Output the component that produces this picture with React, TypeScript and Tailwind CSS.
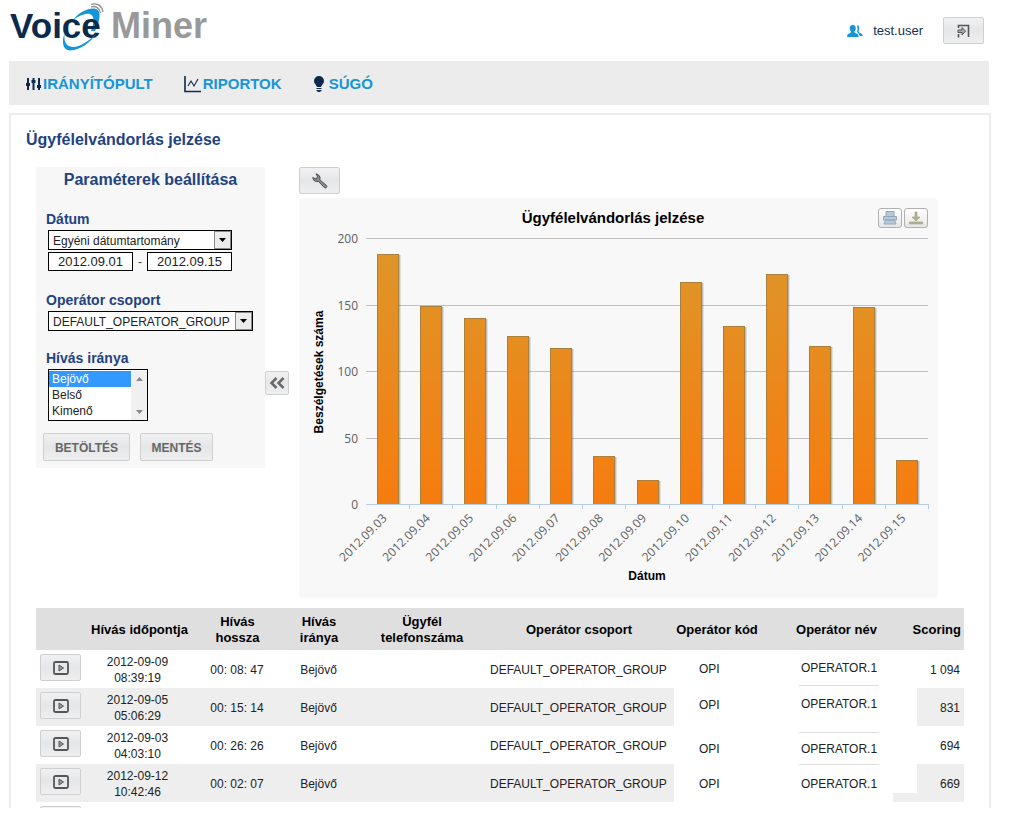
import React from "react";

type CallRow = {
  date: string;
  time: string;
  length: string;
  score: string;
  shaded: boolean;
  align: string;
  box: string;
  line: string;
};

const calls: CallRow[] = [
  { date: "2012-09-09", time: "08:39:19", length: "00: 08: 47", score: "1 094", shaded: false, align: "items-start", box: "h-9", line: "border-b" },
  { date: "2012-09-05", time: "05:06:29", length: "00: 15: 14", score: "831", shaded: true, align: "items-start", box: "h-8", line: "" },
  { date: "2012-09-03", time: "04:03:10", length: "00: 26: 26", score: "694", shaded: false, align: "items-end", box: "h-8", line: "border-t" },
  { date: "2012-09-12", time: "10:42:46", length: "00: 02: 07", score: "669", shaded: true, align: "items-center", box: "h-full", line: "border-t" },
];

const bars = [
  { day: "2012.09.03", value: 188 },
  { day: "2012.09.04", value: 149 },
  { day: "2012.09.05", value: 140 },
  { day: "2012.09.06", value: 126 },
  { day: "2012.09.07", value: 117 },
  { day: "2012.09.08", value: 36 },
  { day: "2012.09.09", value: 18 },
  { day: "2012.09.10", value: 167 },
  { day: "2012.09.11", value: 134 },
  { day: "2012.09.12", value: 173 },
  { day: "2012.09.13", value: 119 },
  { day: "2012.09.14", value: 148 },
  { day: "2012.09.15", value: 33 },
];

const buttonSkin =
  "flex items-center justify-center rounded-[2px] border border-[#cfcfcf] bg-linear-to-b from-[#f1f1f2] via-[#e4e6e8] to-[#efeff0]";

function Logo() {
  return (
    <svg viewBox="0 0 210 54" className="block h-[54px] w-[210px]" role="img" aria-label="Voice Miner">
      <g fill="none" stroke="#8d8d8d">
        <path d="M82 4.500C87 2.500 93 5 94 12" strokeWidth="1.300" />
        <path d="M82 7C86 5.500 90.500 7.500 91.500 13" strokeWidth="1.300" />
      </g>
      <path
        d="M64 20C70 12 79 8 85 8.500C91 9 92 15 89 24L86 31H82C84 25 86 19 83 15.500C80 12 73 14 64 20Z"
        fill="#1495d8"
      />
      <g fontWeight="700" fontFamily="'Liberation Sans', Arial, sans-serif">
        <text x="1" y="38" fontSize="35" fill="#0b2a4d">Voice</text>
        <text x="102" y="38" fontSize="36" fill="#999999">Miner</text>
      </g>
      <path
        d="M56 32C52 42 54 50.500 61 50.500C71 50.500 82 42 88 33C80 41 71 47 64 47C57 46.500 54 41 56 32Z"
        fill="#1495d8"
      />
    </svg>
  );
}

function SlidersIcon() {
  return (
    <svg viewBox="0 0 15 12" className="h-3 w-[15px]" aria-hidden="true" fill="#0b2a4d">
      <path d="M1 0h2v12H1zM6.500 0h2v12h-2zM12 0h2v12h-2zM0 5h4v3H0zM5.500 2h4v3h-4zM11 7h4v3h-4z" />
    </svg>
  );
}

function ReportIcon() {
  return (
    <svg viewBox="0 0 17 17" className="h-[17px] w-[17px]" aria-hidden="true" fill="none" stroke="#0b2a4d">
      <path d="M1 0v15.500h16" strokeWidth="1.600" />
      <path d="M4 10l3-5 3 5 4-7" strokeWidth="1.100" />
    </svg>
  );
}

function BulbIcon() {
  return (
    <svg viewBox="0 0 12 16" className="h-4 w-3" aria-hidden="true" fill="#0b2a4d">
      <path d="M6 0a5 5 0 0 1 5 5c0 2.500-2 3.500-3 6H4C3 8.500 1 7.500 1 5a5 5 0 0 1 5-5zM3.500 12h5v1h-5zM3.500 14h5v1l-2 1h-1l-2-1z" />
    </svg>
  );
}

function UsersIcon() {
  return (
    <svg viewBox="0 0 16 12" className="h-3 w-4" aria-hidden="true" fill="#1495d8">
      <path d="M9.800 0.500h1.500c1.400 1 1.400 3.500.3 5.200l.2 1.500 3.200 1.800.8 2h-3L11.500 8.500 10 7c.8-2 .8-4.500-.2-6.500z" />
      <path d="M5.500 0C8 0 9 1.500 8.700 3.700 8.500 5 8 5.800 7.500 6.300v1.200l3.500 1.700.8 2.800H0l.7-2.800L4 7.500V6.300C3.200 5.500 2.700 4.500 2.700 3 2.700 1 4 0 5.500 0z" />
    </svg>
  );
}

function ExitIcon() {
  return (
    <svg viewBox="0 0 13 14" className="h-3.5 w-[13px]" aria-hidden="true" fill="none" stroke="#555">
      <path d="M1.500 4V1.500h10V13M1.500 10v3.500" strokeWidth="1.600" />
      <path d="M1 6h4V3.500L8.500 7.200 5 11V8.500H1z" strokeWidth="1" fill="#aaa" />
    </svg>
  );
}

function WrenchIcon() {
  return (
    <svg viewBox="0 0 16 16" className="h-4 w-4" aria-hidden="true" fill="#8c8c8c" stroke="#4d4d4d" strokeWidth="1">
      <path d="M4 .8l2.800 1.400 1.400 2.500-.5 2 7 6c.7 1-.6 2.700-2 2.200L6.300 8.300l-2 .3-2.500-1.300L.7 4.500l2.500 1.300 1.800-.6.400-1.900z" />
    </svg>
  );
}

function PlayIcon() {
  return (
    <svg viewBox="0 0 16 14" className="h-3.5 w-4" aria-hidden="true">
      <rect x="1" y="1" width="14" height="12" rx="1.500" fill="none" stroke="#555" strokeWidth="1.800" />
      <path d="M6 4v6l4.500-3z" fill="#999" stroke="#555" strokeWidth="1" />
    </svg>
  );
}

function DropArrow() {
  return (
    <span className="pointer-events-none absolute inset-y-px right-px flex w-[17px] items-center justify-center border border-[#8a8a8a] bg-[#ececec]">
      <svg viewBox="0 0 7 4" className="h-1 w-[7px]" aria-hidden="true">
        <path d="M0 0h7L3.500 4z" fill="#000" />
      </svg>
    </span>
  );
}

function SelectBox({ id, value, width }: { id: string; value: string; width: string }) {
  return (
    <div className={`relative h-5 ${width}`}>
      <select
        id={id}
        className="block h-5 w-full appearance-none rounded-none border border-black bg-white pt-px pl-1 pr-4 text-[12px] leading-4 text-[#222]"
      >
        <option>{value}</option>
      </select>
      <DropArrow />
    </div>
  );
}

function Parameters() {
  const label = "block text-[14px] leading-5 font-bold text-[#1f4381]";
  const dateBox = "h-[19px] w-[85px] border border-black bg-white text-center text-[13px] leading-4 text-[#222]";
  const option = "h-4 min-h-4 px-[3px] pt-px pb-0 text-[12px] leading-[15px] checked:bg-[linear-gradient(#3399ff,#3399ff)] checked:text-white";
  return (
    <form className="h-[301px] w-[229px] shrink-0 bg-[#f7f7f7]" onSubmit={(e) => e.preventDefault()}>
      <h2 className="pt-[3px] text-center text-[16px] leading-5 font-bold text-[#1f4381]">Paraméterek beállítása</h2>
      <div className="mt-[19px] pl-2.5">
        <label htmlFor="range" className={label}>Dátum</label>
        <SelectBox id="range" value="Egyéni dátumtartomány" width="ml-0.5 mt-px w-[184px]" />
        <div className="mt-0.5 ml-0.5 flex h-5 w-[184px] items-start justify-between text-[12px]">
          <input aria-label="Kezdő dátum" className={dateBox} defaultValue="2012.09.01" />
          <span className="leading-5 text-[#444]">-</span>
          <input aria-label="Záró dátum" className={dateBox} defaultValue="2012.09.15" />
        </div>
      </div>
      <div className="mt-[18px] pl-2.5">
        <label htmlFor="group" className={label}>Operátor csoport</label>
        <SelectBox id="group" value="DEFAULT_OPERATOR_GROUP" width="ml-0.5 mt-px w-[205px]" />
      </div>
      <div className="mt-[17px] pl-2.5">
        <label htmlFor="direction" className={label}>Hívás iránya</label>
        <div className="mt-px ml-0.5 flex h-[52px] w-[100px] border border-black bg-white pt-px">
          <select
            id="direction"
            multiple
            size={3}
            defaultValue={["in"]}
            className="h-12 flex-1 appearance-none overflow-hidden rounded-none border-0 bg-white p-0 text-[#222] outline-none"
          >
            <option value="in" className={option}>Bejövő</option>
            <option value="inner" className={option}>Belső</option>
            <option value="out" className={option}>Kimenő</option>
          </select>
          <span className="flex w-4 flex-col items-center justify-between bg-[#f0f0f0] py-1.5">
            <svg viewBox="0 0 7 4" className="h-1 w-[7px]" aria-hidden="true">
              <path d="M0 4h7L3.500 0z" fill="#888" />
            </svg>
            <svg viewBox="0 0 7 4" className="h-1 w-[7px]" aria-hidden="true">
              <path d="M0 0h7L3.500 4z" fill="#888" />
            </svg>
          </span>
        </div>
      </div>
      <div className="mt-3 flex gap-2.5 pl-[7px]">
        <button type="submit" className={`${buttonSkin} h-7 w-[87px] pt-px text-[12px] font-bold text-[#666]`}>BETÖLTÉS</button>
        <button type="button" className={`${buttonSkin} h-7 w-[73px] pt-px text-[12px] font-bold text-[#666]`}>MENTÉS</button>
      </div>
    </form>
  );
}

function Chart() {
  const step = 562 / bars.length;
  const exportButton =
    "flex h-5 w-6 items-center justify-center rounded-[3px] border border-[#b0b0b0] bg-linear-to-b from-white to-[#e6e6e6]";
  return (
    <div className="relative mt-1 rounded-[4px] bg-[#f8f8f8]">
      <svg viewBox="0 0 639 400" className="block w-full" role="img" aria-label="Ügyfélelvándorlás jelzése">
        <defs>
          <linearGradient id="bar" gradientUnits="userSpaceOnUse" x1="0" y1="40" x2="0" y2="306">
            <stop offset="0" stopColor="#dd972b" />
            <stop offset="1" stopColor="#f67c0f" />
          </linearGradient>
        </defs>
        <g fontFamily="'Liberation Sans', Arial, sans-serif" fontWeight="700" fill="#000" textAnchor="middle">
          <text x="314" y="25" fontSize="15">Ügyfélelvándorlás jelzése</text>
          <text x="348" y="382" fontSize="12">Dátum</text>
          <text transform="translate(24 174) rotate(-90)" fontSize="12">Beszélgetések száma</text>
        </g>
        <g fontFamily="'Open Sans', 'Noto Sans', sans-serif" fontSize="12" fill="#606060" textAnchor="end">
          {[200, 150, 100, 50, 0].map((tick, i) => (
            <text key={tick} x="59" y={[45, 112, 178, 245, 311][i]}>{tick}</text>
          ))}
          {bars.map((bar, i) => (
            <text key={bar.day} transform={`translate(${67 + step * (i + 0.5)} 321) rotate(-45)`}>{bar.day}</text>
          ))}
        </g>
        <g stroke="#c0c0c0">
          {[40.5, 107.5, 173.5, 240.5].map((y) => (
            <path key={y} d={`M67 ${y}H629`} />
          ))}
        </g>
        {bars.map((bar, i) => {
          const x = Math.round(67 + step * (i + 0.5) - 10.5);
          const top = Math.round(306 - bar.value * 1.33);
          return (
            <g key={bar.day}>
              <rect x={x + 1} y={top + 1} width="23" height={305 - top} fill="#000" fillOpacity="0.1" />
              <rect x={x + 1} y={top + 1} width="22" height={305 - top} fill="#000" fillOpacity="0.15" />
              <rect x={x + 0.5} y={top + 0.5} width="21" height={306 - top} fill="url(#bar)" stroke="#a8813c" />
            </g>
          );
        })}
        <path d="M67 306.500H629" stroke="#b5cbe0" />
        {[...bars, null].map((_, i) =>
          i === 0 ? null : <path key={i} d={`M${Math.round(67 + step * i) + 0.5} 306v5`} stroke="#b5cbe0" />
        )}
      </svg>
      <div className="absolute top-2.5 right-2.5 flex gap-0.5">
        <button type="button" aria-label="Nyomtatás" className={exportButton}>
          <svg viewBox="0 0 14 14" className="h-3.5 w-3.5" aria-hidden="true" fill="#b5c9df" stroke="#96a7b8">
            <path d="M3 .500h8v5H3zM.500 5.500h13v3.500H.500zM2.500 9h9l1.500 4H1z" />
          </svg>
        </button>
        <button type="button" aria-label="Letöltés" className={exportButton}>
          <svg viewBox="0 0 14 14" className="h-3.5 w-3.5" aria-hidden="true" fill="#b0b28c" stroke="#a0a088" strokeWidth="0.600">
            <path d="M6 1h2v5h3L7 10 3 6h3zM.500 11h13v2H.500z" />
          </svg>
        </button>
      </div>
    </div>
  );
}

function PlayCell({ fill }: { fill: string }) {
  return (
    <td className={`pt-1 pl-1 align-top ${fill}`}>
      <button type="button" aria-label="Lejátszás" className={`${buttonSkin} h-[27px] w-[41px]`}>
        <PlayIcon />
      </button>
    </td>
  );
}

function CallTable() {
  return (
    <table className="mt-2.5 w-full table-fixed border-collapse text-[12px] leading-4 text-[#222]">
      <colgroup>
        <col className="w-[50px]" />
        <col className="w-[107px]" />
        <col className="w-[89px]" />
        <col className="w-[74px]" />
        <col className="w-[132px]" />
        <col />
        <col className="w-[86px]" />
        <col className="w-[133px]" />
        <col className="w-6" />
        <col className="w-[47px]" />
      </colgroup>
      <thead>
        <tr className="h-[42px] bg-[#dfdfdf] text-[13px] text-black">
          <th aria-label="Lejátszás" />
          <th className="pt-0.5">Hívás időpontja</th>
          <th className="pt-0.5">Hívás<br />hossza</th>
          <th className="pt-0.5">Hívás<br />iránya</th>
          <th className="pt-0.5">Ügyfél<br />telefonszáma</th>
          <th className="pt-0.5 pr-1">Operátor csoport</th>
          <th className="pt-0.5">Operátor kód</th>
          <th className="pt-0.5 pl-5">Operátor név</th>
          <th colSpan={2} className="pt-0.5 pr-[3px] text-right">Scoring</th>
        </tr>
      </thead>
      <tbody>
        {calls.map((call) => {
          const fill = call.shaded ? "bg-[#eeeeee]" : "";
          return (
            <tr key={call.date} className="h-[38px]">
              <PlayCell fill={fill} />
              <td className={`pt-0.5 pr-1 text-center ${fill}`}>{call.date}<br />{call.time}</td>
              <td className={`pt-0.5 pr-px text-center ${fill}`}>{call.length}</td>
              <td className={`pt-0.5 pr-px text-center ${fill}`}>Bejövő</td>
              <td className={fill} />
              <td className={`pt-0.5 pl-0.5 ${fill}`}>DEFAULT_OPERATOR_GROUP</td>
              <td className="p-0">
                <div className={`flex h-[38px] pl-[25px] ${call.align}`}>
                  <span className={`flex items-center pt-0.5 ${call.box}`}>OPI</span>
                </div>
              </td>
              <td className="p-0">
                <div className={`flex h-[38px] pl-[39px] ${call.align}`}>
                  <span className={`flex w-20 items-center justify-center border-[#dddddd] ${call.box} ${call.line}`}>OPERATOR.1</span>
                </div>
              </td>
              <td className="p-0 align-bottom">
                {call.date === "2012-09-12" && <div className="h-[9px] bg-[#eeeeee]" />}
              </td>
              <td className={`pt-0.5 pr-1 text-right ${fill}`}>{call.score}</td>
            </tr>
          );
        })}
        <tr className="h-[38px]">
          <PlayCell fill="" />
          <td colSpan={9} />
        </tr>
      </tbody>
    </table>
  );
}

export default function App() {
  const link = "flex items-center text-[15px] leading-5 font-bold text-[#1895d6]";
  return (
    <div className="flex h-screen flex-col overflow-hidden bg-white pr-[23px] pb-[18px] pl-[9px] font-['Liberation_Sans',Arial,sans-serif]">
      <header className="flex h-[61px] shrink-0 items-start justify-between pr-[7px]">
        <Logo />
        <div className="flex items-center pt-[17px] text-[13px] text-[#14304f]">
          <UsersIcon />
          <span className="mr-5 ml-2.5">test.user</span>
          <button type="button" aria-label="Kilépés" className={`${buttonSkin} h-[27px] w-[41px]`}>
            <ExitIcon />
          </button>
        </div>
      </header>
      <nav className="mr-0.5 flex h-11 shrink-0 items-center gap-[31px] bg-[#ececec] pt-0.5 pl-[17px]">
        <a href="#iranyitopult" className={`${link} gap-0.5`}><SlidersIcon />IRÁNYÍTÓPULT</a>
        <a href="#riportok" className={`${link} gap-0.5`}><ReportIcon />RIPORTOK</a>
        <a href="#sugo" className={`${link} gap-1`}><BulbIcon />SÚGÓ</a>
      </nav>
      <main className="mt-2 min-h-0 flex-1 overflow-hidden border-2 border-b-0 border-[#ececec] pr-[25px] pl-[25px]">
        <h1 className="-ml-2.5 pt-[15px] text-[16px] leading-5 font-bold text-[#1f4381]">Ügyfélelvándorlás jelzése</h1>
        <div className="mt-[17px] flex items-start">
          <Parameters />
          <button type="button" aria-label="Panel elrejtése" className={`${buttonSkin} mt-51 h-6 w-6 shrink-0`}>
            <svg viewBox="0 0 16 12" className="h-3 w-4" aria-hidden="true" fill="none" stroke="#6a6a6a" strokeWidth="2.500">
              <path d="M7.500 1l-5 5 5 5M14.500 1l-5 5 5 5" />
            </svg>
          </button>
          <section className="mr-[26px] ml-2.5 min-w-0 flex-1">
            <button type="button" aria-label="Beállítások" className={`${buttonSkin} h-[27px] w-[41px]`}>
              <WrenchIcon />
            </button>
            <Chart />
          </section>
        </div>
        <CallTable />
      </main>
    </div>
  );
}
